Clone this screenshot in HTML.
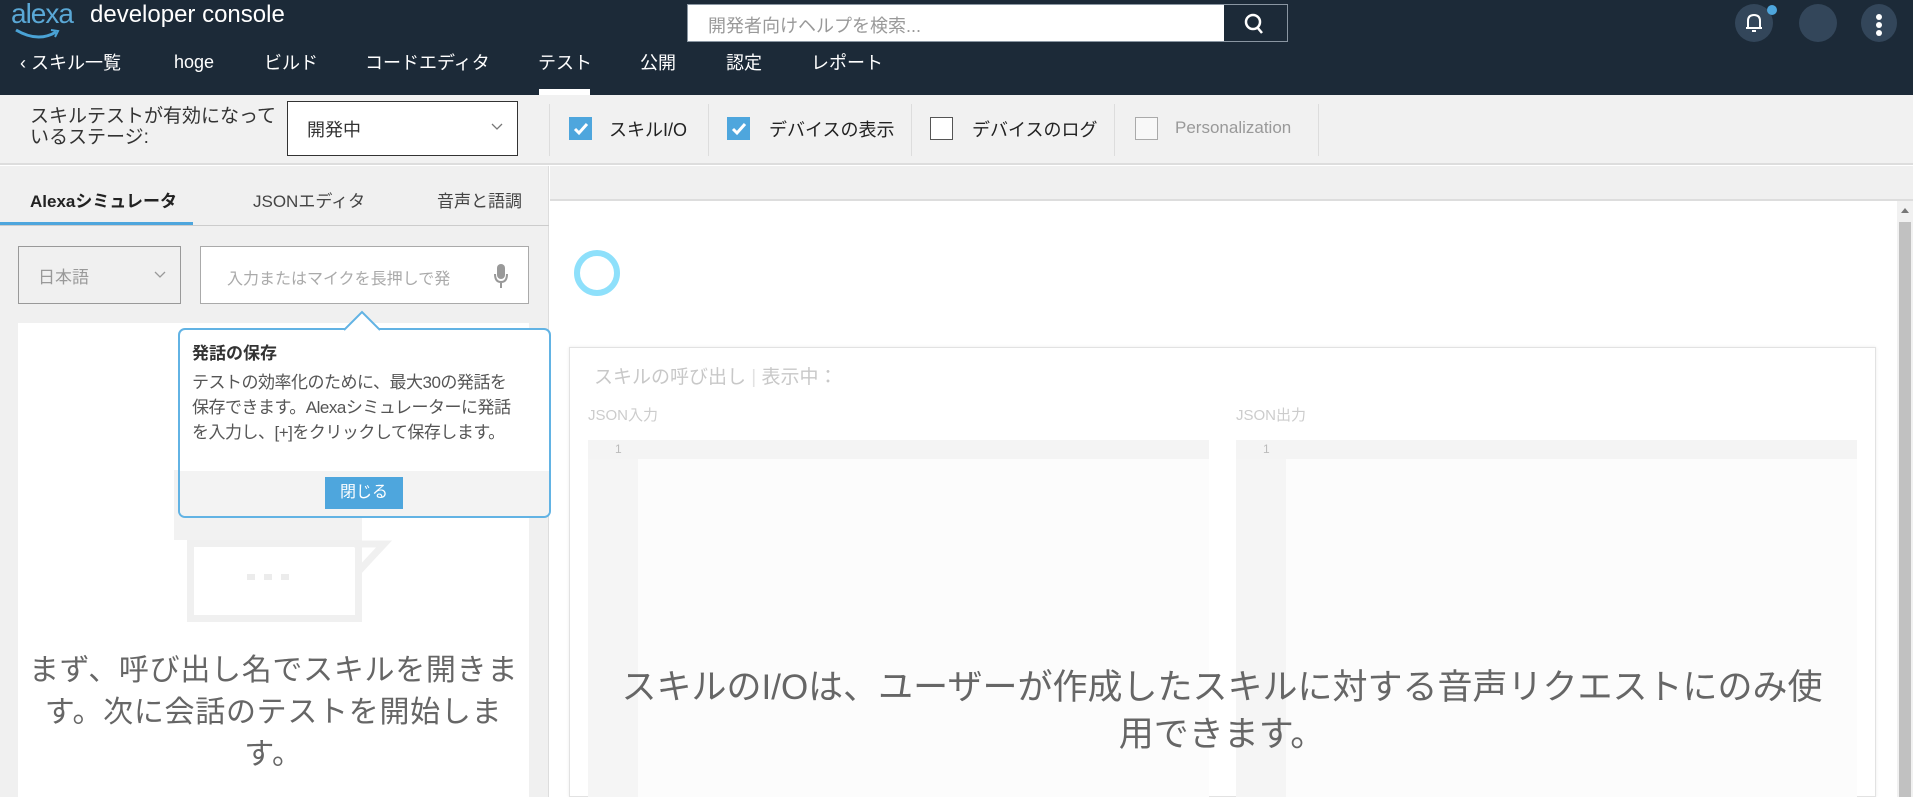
<!DOCTYPE html>
<html><head><meta charset="utf-8"><style>
*{box-sizing:border-box;margin:0;padding:0}
body{width:1913px;height:797px;overflow:hidden;background:#fff;font-family:"Liberation Sans","Noto Sans CJK JP",sans-serif;position:relative}
.a{position:absolute;white-space:nowrap}
#hdr{position:absolute;left:0;top:0;width:1913px;height:95px;background:#1c2a38}
.nav{position:absolute;top:50px;color:#fff;font-size:18px;line-height:26px}
.sep{position:absolute;top:104px;width:1px;height:52px;background:#ddd}
.cb{position:absolute;top:117px;width:23px;height:23px;border:1px solid #555;background:#fff}
.cb.on{background:#4ea6dd;border-color:#4ea6dd}
.lbl{position:absolute;top:116px;font-size:18px;color:#222}
</style></head><body>
<div id="hdr">
  <div class="a" style="left:11px;top:-2px;color:#5aa8d6;font-size:28px;letter-spacing:-1px">alexa</div>
  <svg class="a" style="left:14px;top:28px" width="48" height="14"><path d="M2 2 Q24 15 42 4" stroke="#4aa3d6" stroke-width="3" fill="none"/><path d="M37 2 L44 3 L41 9" stroke="#4aa3d6" stroke-width="2" fill="none"/></svg>
  <div class="a" style="left:90px;top:1px;color:#fff;font-size:24px">developer console</div>
  <div class="a" style="left:687px;top:4px;width:601px;height:38px;border:1px solid #8a96a2;background:#fff"></div>
  <div class="a" style="left:1224px;top:5px;width:63px;height:36px;background:#1c2a38"></div>
  <svg class="a" style="left:1242px;top:11px" width="26" height="26"><circle cx="11" cy="11" r="7" stroke="#fff" stroke-width="2.5" fill="none"/><path d="M15 16 L20 22" stroke="#fff" stroke-width="2.5"/></svg>
  <div class="a" style="left:708px;top:12px;color:#999;font-size:18px">開発者向けヘルプを検索...</div>
  <div class="a" style="left:1735px;top:4px;width:38px;height:38px;border-radius:50%;background:#33465a"></div>
  <svg class="a" style="left:1743px;top:11px" width="22" height="24"><path d="M5 17 V10 Q5 4 11 4 Q17 4 17 10 V17 Z M3 17 H19 M9 20 H13" stroke="#fff" stroke-width="2" fill="none"/></svg>
  <div class="a" style="left:1767px;top:5px;width:10px;height:10px;border-radius:50%;background:#4ea6dd"></div>
  <div class="a" style="left:1799px;top:4px;width:38px;height:38px;border-radius:50%;background:#33465a"></div>
  <div class="a" style="left:1861px;top:4px;width:36px;height:38px;border-radius:50%;background:#33465a"></div>
  <div class="a" style="left:1876px;top:14px;width:6px;height:6px;border-radius:50%;background:#fff"></div>
  <div class="a" style="left:1876px;top:22px;width:6px;height:6px;border-radius:50%;background:#fff"></div>
  <div class="a" style="left:1876px;top:30px;width:6px;height:6px;border-radius:50%;background:#fff"></div>
  <div class="nav" style="left:20px">‹ スキル一覧</div>
  <div class="nav" style="left:174px;top:49px">hoge</div>
  <div class="nav" style="left:264px">ビルド</div>
  <div class="nav" style="left:365px">コードエディタ</div>
  <div class="nav" style="left:538px">テスト</div>
  <div class="nav" style="left:640px">公開</div>
  <div class="nav" style="left:726px">認定</div>
  <div class="nav" style="left:811px">レポート</div>
  <div class="a" style="left:539px;top:89px;width:51px;height:6px;background:#fff"></div>
</div>
<!-- toolbar -->
<div class="a" style="left:0;top:95px;width:1913px;height:70px;background:#f1f1f1;border-bottom:2px solid #ddd"></div>
<div class="a" style="left:30px;top:106px;font-size:19px;line-height:21px;color:#333">スキルテストが有効になって<br>いるステージ:</div>
<div class="a" style="left:287px;top:101px;width:231px;height:55px;border:1px solid #333;background:#fff"></div>
<div class="a" style="left:307px;top:116px;font-size:18px;color:#333">開発中</div>
<svg class="a" style="left:490px;top:122px" width="14" height="10"><path d="M2 2 L7 7 L12 2" stroke="#777" stroke-width="1.3" fill="none"/></svg>
<div class="sep" style="left:549px"></div><div class="sep" style="left:708px"></div><div class="sep" style="left:911px"></div><div class="sep" style="left:1114px"></div><div class="sep" style="left:1318px"></div>
<div class="cb on" style="left:569px"></div><svg class="a" style="left:571px;top:120px" width="20" height="18"><path d="M4 9 L8 13 L16 4" stroke="#fff" stroke-width="3" fill="none"/></svg>
<div class="lbl" style="left:609px">スキルI/O</div>
<div class="cb on" style="left:727px"></div><svg class="a" style="left:729px;top:120px" width="20" height="18"><path d="M4 9 L8 13 L16 4" stroke="#fff" stroke-width="3" fill="none"/></svg>
<div class="lbl" style="left:769px">デバイスの表示</div>
<div class="cb" style="left:930px"></div>
<div class="lbl" style="left:972px">デバイスのログ</div>
<div class="cb" style="left:1135px;border-color:#aaa;background:#f8f8f8"></div>
<div class="lbl" style="left:1175px;top:118px;color:#999;font-size:17px">Personalization</div>
<!-- left panel -->
<div class="a" style="left:0;top:166px;width:549px;height:631px;background:#f0f0f0;border-right:1px solid #ddd"></div>
<div class="a" style="left:0;top:225px;width:549px;height:1px;background:#ccc"></div>
<div class="a" style="left:30px;top:187px;font-size:17px;font-weight:bold;color:#222">Alexaシミュレータ</div>
<div class="a" style="left:0;top:222px;width:193px;height:3px;background:#4ea6dd"></div>
<div class="a" style="left:253px;top:187px;font-size:17px;color:#444">JSONエディタ</div>
<div class="a" style="left:437px;top:187px;font-size:17px;color:#444">音声と語調</div>
<div class="a" style="left:18px;top:246px;width:163px;height:58px;border:1px solid #999;background:#f0f0f0"></div>
<div class="a" style="left:38px;top:263px;font-size:17px;color:#999">日本語</div>
<svg class="a" style="left:153px;top:270px" width="14" height="10"><path d="M2 2 L7 7 L12 2" stroke="#999" stroke-width="1.3" fill="none"/></svg>
<div class="a" style="left:200px;top:246px;width:329px;height:58px;border:1px solid #aaa;background:#fff"></div>
<div class="a" style="left:227px;top:265px;font-size:16px;color:#aaa">入力またはマイクを長押しで発</div>
<svg class="a" style="left:492px;top:262px" width="18" height="28"><rect x="5" y="2" width="8" height="15" rx="4" fill="#999"/><path d="M3 12 Q3 20 9 20 Q15 20 15 12 M9 20 V26" stroke="#999" stroke-width="2" fill="none"/></svg>
<div class="a" style="left:18px;top:323px;width:511px;height:474px;background:#fff"></div>
<!-- illustration -->
<div class="a" style="left:174px;top:470px;width:188px;height:70px;background:#f2f2f2"></div>
<div class="a" style="left:187px;top:540px;width:175px;height:82px;border:7px solid #f0f0f0"></div>
<svg class="a" style="left:354px;top:540px" width="40" height="50"><path d="M0 4 L30 4 L4 32" stroke="#f0f0f0" stroke-width="7" fill="none"/></svg>
<div class="a" style="left:247px;top:574px;width:42px;height:6px;background:repeating-linear-gradient(90deg,#ececec 0 8px,transparent 8px 17px)"></div>
<div class="a" style="left:18px;top:650px;width:511px;text-align:center;font-size:30px;line-height:42px;color:#666;letter-spacing:0.7px">まず、呼び出し名でスキルを開きま<br>す。次に会話のテストを開始しま<br>す。</div>
<!-- popover -->
<div class="a" style="left:178px;top:328px;width:373px;height:190px;border:2px solid #62b3e4;border-radius:7px;background:#fff;overflow:hidden">
  <div class="a" style="left:0;top:141px;width:373px;height:50px;background:#f3f3f3"></div>
</div>
<svg class="a" style="left:344px;top:309px" width="36" height="22"><path d="M0 21 L18 3 L36 21" fill="#fff" stroke="#62b3e4" stroke-width="2"/></svg>
<div class="a" style="left:192px;top:339px;font-size:17px;font-weight:bold;color:#333">発話の保存</div>
<div class="a" style="left:192px;top:370px;font-size:17px;line-height:25px;color:#555;letter-spacing:-0.5px">テストの効率化のために、最大30の発話を<br>保存できます。Alexaシミュレーターに発話<br>を入力し、[+]をクリックして保存します。</div>
<div class="a" style="left:325px;top:477px;width:78px;height:32px;background:#4ea6dd;color:#fff;font-size:16px;text-align:center;line-height:32px">閉じる</div>
<!-- right -->
<div class="a" style="left:550px;top:166px;width:1363px;height:35px;background:#f0f0f0;border-bottom:2px solid #ddd"></div>
<div class="a" style="left:1897px;top:201px;width:16px;height:596px;background:#f1f1f1"></div>
<div class="a" style="left:1899px;top:222px;width:12px;height:575px;background:#c1c1c1"></div>
<svg class="a" style="left:1899px;top:205px" width="12" height="10"><path d="M2 8 L6 3 L10 8Z" fill="#777"/></svg>
<svg class="a" style="left:571px;top:249px" width="52" height="50"><circle cx="26" cy="24" r="20" stroke="#8ee0fb" stroke-width="6" fill="none"/></svg>
<div class="a" style="left:569px;top:347px;width:1307px;height:450px;border:1px solid #e2e2e2;background:#fff;box-shadow:0 0 3px rgba(0,0,0,.08)"></div>
<div class="a" style="left:594px;top:362px;font-size:19px;color:#c8c8c8">スキルの呼び出し <span style="color:#e2e2e2">|</span> 表示中：</div>
<div class="a" style="left:588px;top:404px;font-size:15px;color:#ccc">JSON入力</div>
<div class="a" style="left:1236px;top:404px;font-size:15px;color:#ccc">JSON出力</div>
<div class="a" style="left:588px;top:440px;width:621px;height:357px;background:#fcfcfc"></div>
<div class="a" style="left:588px;top:440px;width:50px;height:357px;background:#f5f5f5"></div>
<div class="a" style="left:588px;top:440px;width:621px;height:19px;background:#f4f4f4"></div>
<div class="a" style="left:615px;top:442px;font-size:12px;color:#bbb">1</div>
<div class="a" style="left:1236px;top:440px;width:621px;height:357px;background:#fcfcfc"></div>
<div class="a" style="left:1236px;top:440px;width:50px;height:357px;background:#f5f5f5"></div>
<div class="a" style="left:1236px;top:440px;width:621px;height:19px;background:#f4f4f4"></div>
<div class="a" style="left:1263px;top:442px;font-size:12px;color:#bbb">1</div>
<div class="a" style="left:580px;top:664px;width:1284px;text-align:center;font-size:35px;line-height:47px;color:#666">スキルのI/Oは、ユーザーが作成したスキルに対する音声リクエストにのみ使<br>用できます。</div>
</body></html>
